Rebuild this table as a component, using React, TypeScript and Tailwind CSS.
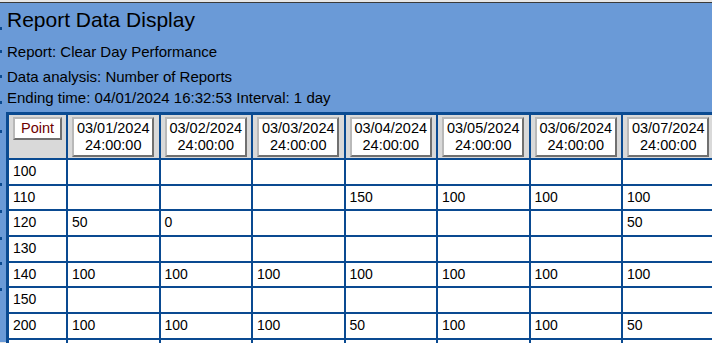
import React from 'react';

const DATES = ['03/01/2024', '03/02/2024', '03/03/2024', '03/04/2024', '03/05/2024', '03/06/2024', '03/07/2024', '03/08/2024'];

const ROWS: [string, string[]][] = [
  ['100', ['', '', '', '', '', '', '', '']],
  ['110', ['', '', '', '150', '100', '100', '100', '']],
  ['120', ['50', '0', '', '', '', '', '50', '']],
  ['130', ['', '', '', '', '', '', '', '']],
  ['140', ['100', '100', '100', '100', '100', '100', '100', '']],
  ['150', ['', '', '', '', '', '', '', '']],
  ['200', ['100', '100', '100', '50', '100', '100', '50', '']],
  ['210', ['', '', '', '', '', '', '', '']],
];

const btn =
  'bg-white border-2 border-t-[#b9b9b9] border-l-[#b9b9b9] border-b-[#707070] border-r-[#707070]';

export default function App() {
  return (
    <div
      className="relative w-[712px] h-[343px] overflow-hidden bg-[#e6e6e6] text-black"
      style={{ fontFamily: '"Liberation Sans", Arial, sans-serif' }}
    >
      <div className="mt-[2px] border-t border-[#3a3a3a] bg-[#6a9ad7] h-[340px] pl-[7px]">
        <div className="pt-[4px] text-[21px] leading-[25px]">Report Data Display</div>
        <div className="mt-[10px] text-[15px] leading-[20px]">Report: Clear Day Performance</div>
        <div className="mt-[5px] text-[15px] leading-[20px]">Data analysis: Number of Reports</div>
        <div className="mt-[1px] text-[15px] leading-[20px]">Ending time: 04/01/2024 16:32:53 Interval: 1 day</div>

        <div className="mt-[4px] -ml-[1px] w-[800px] bg-[#0a4a91] pt-[3px] pl-[3px]">
          <div className="grid grid-cols-[57px_repeat(8,90.5px)] gap-[2px]">
            <div className="bg-[#d9d9d9] h-[43px] pl-[4px] pt-[2px]">
              <div className={`${btn} w-[49px] h-[23px] text-center text-[14.5px] leading-[19px] text-[#6e0000]`}>
                Point
              </div>
            </div>
            {DATES.map((d) => (
              <div key={d} className="bg-[#d9d9d9] h-[43px] flex justify-center pt-[2px]">
                <div
                  className={`${btn} w-[82px] h-[40px] text-[14.5px] leading-[17px] flex flex-col items-center justify-center`}
                >
                  <span>{d}</span>
                  <span>24:00:00</span>
                </div>
              </div>
            ))}
            {ROWS.map(([point, vals]) => (
              <React.Fragment key={point}>
                <div className="bg-white h-[23.7px] pl-[4px] text-[14px] leading-[23.7px]">{point}</div>
                {vals.map((v, i) => (
                  <div key={i} className="bg-white h-[23.7px] pl-[4px] text-[14px] leading-[23.7px]">
                    {v}
                  </div>
                ))}
              </React.Fragment>
            ))}
          </div>
        </div>
      </div>

      {[27, 50, 75, 101, 130, 183, 210, 237, 262, 288].map((y) => (
        <div key={y} className="absolute left-0 w-[2px] h-[3px] bg-[#0a4a91]" style={{ top: y }} />
      ))}
    </div>
  );
}
